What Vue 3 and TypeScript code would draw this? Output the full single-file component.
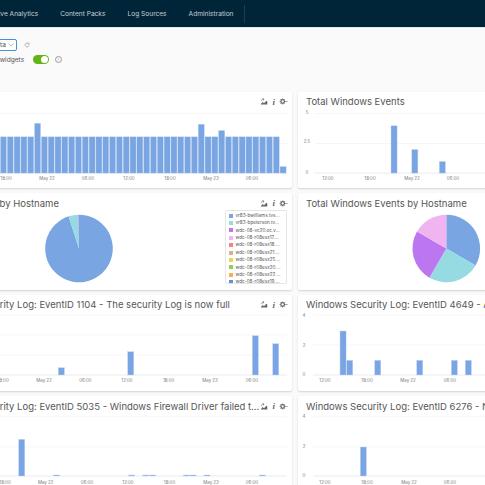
<script setup lang="ts">
type Bar = { x: number; top: number };
type Slice = { from: number; to: number; color: string };
type Card = {
  title: string;
  left: number;
  top: number;
  tools?: boolean;
  // bar chart
  base?: number;
  grid?: number[];
  gridFrom?: number;
  labelY?: number;
  labels?: [string, number][];
  yLabels?: [string, number][];
  yLabelX?: number;
  bars?: Bar[];
  // pie chart
  pie?: { cx: number; cy: number; slices: Slice[] };
  legend?: boolean;
};

const navItems = ["Interactive Analytics", "Content Packs", "Log Sources", "Administration"];

const LEFT = -78;
const RIGHT = 298;

const row1Bars: Bar[] = [];
for (let i = -1; i < 42; i++) {
  let top = 135.3;
  if (i === 5) top = 121.7;
  if (i === 29) top = 122.7;
  if (i === 32) top = 129;
  if (i === 41) top = 165;
  row1Bars.push({ x: 0.4 + 6.82 * i, top });
}

const cards: Card[] = [
  {
    title: "Total Events",
    left: LEFT,
    top: 90.5,
    tools: true,
    base: 171.6,
    grid: [112, 142],
    gridFrom: -40,
    labelY: 178,
    labels: [["18:00", 6], ["May 22", 47], ["06:00", 88], ["12:00", 129], ["18:00", 170], ["May 23", 211], ["06:00", 252]],
    bars: row1Bars,
  },
  {
    title: "Total Windows Events",
    left: RIGHT,
    top: 90.5,
    base: 171.6,
    grid: [112, 142],
    gridFrom: 315,
    labelY: 178,
    labels: [["12:00", 328], ["18:00", 370], ["May 22", 412], ["06:00", 453]],
    yLabels: [["5", 112.7], ["2.5", 141.7], ["0", 172.7]],
    yLabelX: 307,
    bars: [{ x: 391, top: 124.3 }, { x: 411.8, top: 148 }, { x: 439.3, top: 160 }],
  },
  {
    title: "Recent Events by Hostname",
    left: LEFT,
    top: 192.5,
    tools: true,
    legend: true,
    pie: {
      cx: 79,
      cy: 247.5,
      slices: [
        { from: 0, to: 342, color: "#7aa5e3" },
        { from: 342, to: 359, color: "#97dbe2" },
        { from: 359, to: 360, color: "#bb76f0" },
      ],
    },
  },
  {
    title: "Total Windows Events by Hostname",
    left: RIGHT,
    top: 192.5,
    pie: {
      cx: 446.3,
      cy: 247.5,
      slices: [
        { from: 0, to: 120, color: "#7aa5e3" },
        { from: 120, to: 210, color: "#97dbe2" },
        { from: 210, to: 300, color: "#bb76f0" },
        { from: 300, to: 360, color: "#f0b4f0" },
      ],
    },
  },
  {
    title: "Windows Security Log: EventID 1104 - The security Log is now full",
    left: LEFT,
    top: 294,
    tools: true,
    base: 374,
    grid: [314, 334, 354],
    gridFrom: -40,
    labelY: 381,
    labels: [["18:00", 3], ["May 22", 44], ["06:00", 85.5], ["12:00", 127], ["18:00", 168.7], ["May 23", 210], ["06:00", 252]],
    bars: [{ x: 58.3, top: 366.7 }, { x: 127.7, top: 350.7 }, { x: 252.3, top: 334.7 }, { x: 272.7, top: 342.7 }],
  },
  {
    title: "Windows Security Log: EventID 4649 - A replay attack was detected",
    left: RIGHT,
    top: 294,
    base: 374,
    grid: [314, 344],
    gridFrom: 313,
    labelY: 381,
    labels: [["12:00", 325], ["18:00", 367], ["May 22", 408], ["06:00", 450]],
    yLabels: [["4", 315.7], ["2", 345.5], ["0", 375]],
    yLabelX: 304,
    bars: [
      { x: 340, top: 330 }, { x: 346.7, top: 359.3 }, { x: 374.7, top: 359.3 },
      { x: 416.7, top: 359.3 }, { x: 451.3, top: 359.3 }, { x: 465.3, top: 359.3 },
    ],
  },
  {
    title: "Windows Security Log: EventID 5035 - Windows Firewall Driver failed to start",
    left: LEFT,
    top: 395,
    tools: true,
    base: 475,
    grid: [415.7, 446],
    gridFrom: -40,
    labelY: 482.5,
    labels: [["18:00", 5], ["May 22", 45.7], ["06:00", 87], ["12:00", 128], ["18:00", 169.5], ["May 23", 211], ["06:00", 252]],
    bars: [
      { x: 18.7, top: 438.3 }, { x: 53.3, top: 474 }, { x: 128.7, top: 474 }, { x: 142.7, top: 474 },
      { x: 149.4, top: 474 }, { x: 183.3, top: 474 }, { x: 190, top: 474 }, { x: 204, top: 474 }, { x: 259.3, top: 474 },
    ],
  },
  {
    title: "Windows Security Log: EventID 6276 - Network Policy Server quarantined a user",
    left: RIGHT,
    top: 395,
    base: 475,
    grid: [415.7, 446],
    gridFrom: 313,
    labelY: 482.5,
    labels: [["12:00", 325], ["18:00", 367], ["May 22", 409], ["06:00", 450]],
    yLabels: [["4", 417.4], ["2", 446.7], ["0", 475.7]],
    yLabelX: 304,
    bars: [{ x: 360.3, top: 446 }],
  },
];

const legend = [
  ["#7aa5e3", "vr83-bwilliams.tvs..."],
  ["#97dbe2", "vr83-bpeterson.tv..."],
  ["#bb76f0", "wdc-08-vc20.oc.v..."],
  ["#f0b4f0", "wdc-08-r08esx17...."],
  ["#f98080", "wdc-08-r08esx18...."],
  ["#dcae90", "wdc-08-r08esx21...."],
  ["#eed34e", "wdc-08-r08esx25...."],
  ["#8ccf5c", "wdc-08-r08esx20...."],
  ["#fbb04f", "wdc-08-r08esx22...."],
  ["#5f8fd8", "wdc-08-r08esx19...."],
];

function slicePath(cx: number, cy: number, r: number, s: Slice): string {
  const pt = (deg: number) => {
    const a = (deg * Math.PI) / 180;
    return `${(cx + r * Math.sin(a)).toFixed(2)} ${(cy - r * Math.cos(a)).toFixed(2)}`;
  };
  const large = s.to - s.from > 180 ? 1 : 0;
  return `M${cx} ${cy}L${pt(s.from)}A${r} ${r} 0 ${large} 1 ${pt(s.to)}Z`;
}

// chart data is in page pixels, the viewBox maps it back into the card body
function box(c: Card): string {
  return `${c.left} ${c.top + 20} 370 76.5`;
}

function gridEnd(c: Card): number {
  return c.left === RIGHT ? 668 : 287;
}
</script>

<template>
  <div class="page">
    <header class="topbar">
      <nav class="nav">
        <a v-for="item in navItems" :key="item" class="nav-item">{{ item }}</a>
      </nav>
      <span class="nav-divider"></span>
    </header>

    <section class="toolbar">
      <div class="toolbar-row">
        <div class="select">
          <span>Data</span>
          <svg class="chevron" viewBox="0 0 8 5"><path d="M.7.8 4 4l3.3-3.2" /></svg>
        </div>
        <svg class="refresh" viewBox="0 0 10 10"><path d="M8 3.2A3.3 3.3 0 1 0 8.3 6M8.4 1.4v2.2H6.2" /></svg>
      </div>
      <div class="toolbar-row">
        <span class="auto-label">Auto-refresh widgets</span>
        <span class="toggle"><span class="knob"></span></span>
        <span class="info">i</span>
      </div>
    </section>

    <main class="dash">
      <article v-for="c in cards" :key="c.title" class="card" :class="{ 'card-left': c.left === LEFT }">
        <div class="card-head">
          <h3 class="card-title">{{ c.title }}</h3>
          <div v-if="c.tools" class="tools">
            <svg class="tool" viewBox="0 0 10 9">
              <path class="fill" d="M.8 8.5 3 5l2 1.6L8 3.6l1.2 1v3.9z" />
              <path d="M1 3.4 4.8 1.2M4.8 1.2 3 .6M4.8 1.2 4.2 3" />
            </svg>
            <span class="tool-i">i</span>
            <svg class="tool gear" viewBox="0 0 11 9">
              <circle cx="4.4" cy="4.5" r="2.3" />
              <path d="M4.4.4v1.6M4.4 7v1.6M.3 4.5h1.6M6.9 4.5h3.9M1.5 1.6l1.1 1.1M6.2 6.3l1.1 1.1M1.5 7.4l1.1-1.1M6.2 2.7l1.1-1.1" />
            </svg>
          </div>
        </div>

        <div v-if="c.pie" class="pie-body">
          <svg class="pie" :class="{ narrow: c.legend }" :viewBox="`${c.left} 209 ${c.legend ? 303 : 370} 79`">
            <path v-for="s in c.pie.slices" :key="s.from" :d="slicePath(c.pie.cx, c.pie.cy, 33.8, s)" :fill="s.color" />
          </svg>
          <ul v-if="c.legend" class="legend">
            <li v-for="l in legend" :key="l[1]"><i :style="{ background: l[0] }"></i>{{ l[1] }}</li>
          </ul>
        </div>

        <svg v-else class="chart" :viewBox="box(c)">
          <line v-for="g in c.grid" :key="g" class="grid" :x1="c.gridFrom" :x2="gridEnd(c)" :y1="g" :y2="g" />
          <line class="axis" :x1="c.gridFrom" :x2="gridEnd(c)" :y1="c.base" :y2="c.base" />
          <rect v-for="b in c.bars" :key="b.x" class="bar" :x="b.x" :y="b.top" width="6.1" :height="(c.base ?? 0) - b.top" />
          <text v-for="l in c.yLabels" :key="l[0]" class="tick" :x="c.yLabelX" :y="l[1]" text-anchor="middle">{{ l[0] }}</text>
          <text v-for="l in c.labels" :key="l[1]" class="tick" :x="l[1]" :y="c.labelY" text-anchor="middle">{{ l[0] }}</text>
        </svg>
      </article>
    </main>
  </div>
</template>

<style>
html,
body {
  margin: 0;
  overflow: hidden;
  background: #fafafa;
}
</style>

<style scoped>
.page {
  width: 485px;
  height: 485px;
  overflow: hidden;
  font-family: Inter, "Liberation Sans", sans-serif;
  color: #565656;
}

.topbar {
  height: 27px;
  background: #002538;
  display: flex;
  align-items: center;
  border-bottom: 1px solid #e4e8ea;
}

.nav {
  display: flex;
  gap: 22px;
  margin-left: -25px;
}

.nav-item {
  font-size: 6.6px;
  color: #c3cfd6;
  white-space: nowrap;
}

.nav-divider {
  width: 1px;
  height: 18px;
  margin-left: 10px;
  background: #1b3e50;
}

.toolbar {
  height: 62px;
  padding-top: 9px;
  box-sizing: border-box;
  font-size: 6.6px;
}

.toolbar-row {
  display: flex;
  align-items: center;
  height: 15px;
}

.select {
  width: 50px;
  margin-left: -33px;
  height: 12px;
  box-sizing: border-box;
  border: 1px solid #4a90d9;
  border-radius: 2px;
  background: #fff;
  display: flex;
  align-items: center;
  justify-content: flex-end;
  gap: 2px;
  padding-right: 2px;
}

.chevron {
  width: 6px;
  height: 4px;
  fill: none;
  stroke: #8a8a8a;
  stroke-width: 0.8;
}

.refresh {
  width: 6px;
  height: 6px;
  margin-left: 6.5px;
  fill: none;
  stroke: #8a8a8a;
  stroke-width: 1;
}

.auto-label {
  margin-left: -42px;
  white-space: nowrap;
}

.toggle {
  width: 16px;
  height: 9px;
  margin-left: 9px;
  border-radius: 5px;
  background: #60b515;
  display: flex;
  justify-content: flex-end;
  align-items: center;
  padding-right: 1px;
  box-sizing: border-box;
}

.knob {
  width: 7px;
  height: 7px;
  border-radius: 50%;
  background: #fff;
}

.info {
  width: 5px;
  height: 5px;
  margin-left: 5.5px;
  border: 0.6px solid #999;
  border-radius: 50%;
  color: #999;
  font-size: 4px;
  line-height: 5px;
  text-align: center;
}

.dash {
  display: grid;
  grid-template-columns: 370px 370px;
  grid-auto-rows: 96.5px;
  gap: 5px 6px;
  margin-left: -78px;
  width: 746px;
  margin-top: 1.5px;
}

.card {
  background: #fff;
  border-radius: 2px;
  box-shadow: 0 1px 2px rgba(0, 0, 0, 0.16);
  overflow: hidden;
  display: flex;
  flex-direction: column;
}

.card-head {
  height: 20px;
  flex: none;
  display: flex;
  align-items: center;
  padding: 0 8px;
  box-sizing: border-box;
}

.card-left .card-head {
  padding-left: 11px;
}

.card-title {
  flex: 0 1 auto;
  min-width: 0;
  margin: 0 1px 0 0;
  font-size: 9.5px;
  font-weight: 400;
  color: #565656;
  white-space: nowrap;
  overflow: hidden;
  text-overflow: ellipsis;
}

.tools {
  margin-left: auto;
  margin-right: -4px;
  display: flex;
  align-items: center;
  gap: 4px;
  flex: none;
}

.tool {
  width: 8px;
  height: 7px;
  fill: none;
  stroke: #666;
  stroke-width: 0.8;
}

.tool .fill {
  fill: #666;
  stroke: none;
}

.tool.gear {
  width: 9px;
}

.tool.gear circle {
  stroke-width: 1.6;
}

.tool-i {
  font: italic 700 9px "Liberation Serif", serif;
  color: #666;
  line-height: 8px;
}

.chart {
  display: block;
  width: 370px;
  height: 76.5px;
  flex: none;
  overflow: visible;
}

.grid {
  stroke: #f2f2f2;
  stroke-width: 0.7;
}

.axis {
  stroke: #dfe3ea;
  stroke-width: 0.7;
}

.bar {
  fill: #7aa5e3;
  stroke: #c6d8f2;
  stroke-width: 0.4;
}

.tick {
  font-size: 4.4px;
  fill: #777;
}

.pie-body {
  flex: none;
  display: flex;
  margin-top: -3.5px;
}

.pie {
  display: block;
  width: 370px;
  height: 79px;
  flex: none;
}

.pie.narrow {
  width: 303px;
}

.legend {
  list-style: none;
  margin: 0;
  padding: 1.3px 0 0 3px;
  width: 62px;
  height: 74.7px;
  box-sizing: border-box;
  border: 0.6px solid #e6e6e6;
  border-radius: 2px;
  font-size: 4.6px;
  line-height: 7.41px;
  color: #565656;
  white-space: nowrap;
  overflow: hidden;
}

.legend li {
  display: flex;
  align-items: center;
  gap: 2.5px;
}

.legend i {
  width: 4px;
  height: 4px;
  flex: none;
}
</style>
